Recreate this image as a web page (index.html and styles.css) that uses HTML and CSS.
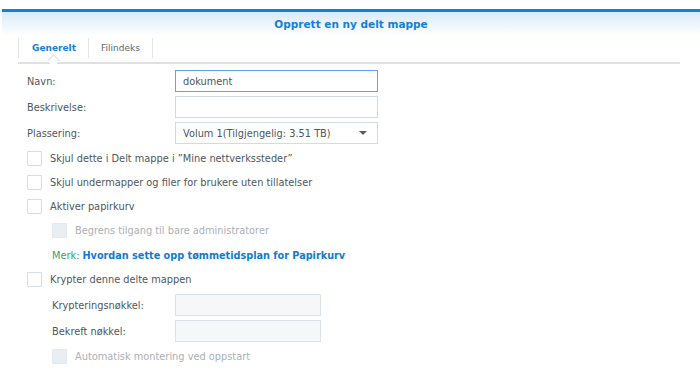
FILE: index.html
```html
<!DOCTYPE html>
<html lang="no">
<head>
    <meta charset="UTF-8">
    <meta name="viewport" content="width=device-width, initial-scale=1.0">
    <title>Opprett en ny delt mappe</title>
    <link rel="stylesheet" href="styles.css">
</head>
<body>
    <div class="dialog">
        <div class="header">Opprett en ny delt mappe</div>
        <div class="tabs">
            <div class="tab active">Generelt</div>
            <div class="tab">Filindeks</div>
        </div>
        <form class="form">
            <div class="field">
                <label for="navn">Navn:</label>
                <input type="text" id="navn" class="text focus" value="dokument">
            </div>
            <div class="field">
                <label for="beskrivelse">Beskrivelse:</label>
                <input type="text" id="beskrivelse" class="text">
            </div>
            <div class="field">
                <label>Plassering:</label>
                <div class="select">
                    <span>Volum 1(Tilgjengelig: 3.51 TB)</span>
                    <span class="arrow"></span>
                </div>
            </div>

            <div class="check"><span class="box"></span>Skjul dette i Delt mappe i ”Mine nettverkssteder”</div>
            <div class="check"><span class="box"></span>Skjul undermapper og filer for brukere uten tillatelser</div>
            <div class="check"><span class="box"></span>Aktiver papirkurv</div>
            <div class="check sub disabled tall"><span class="box"></span>Begrens tilgang til bare administratorer</div>
            <div class="note sub"><span class="merk">Merk:</span> <a href="#">Hvordan sette opp tømmetidsplan for Papirkurv</a></div>
            <div class="check tall"><span class="box"></span>Krypter denne delte mappen</div>

            <div class="field sub">
                <label for="key">Krypteringsnøkkel:</label>
                <input type="password" id="key" class="text short" disabled>
            </div>
            <div class="field sub">
                <label for="key2">Bekreft nøkkel:</label>
                <input type="password" id="key2" class="text short" disabled>
            </div>
            <div class="check sub disabled"><span class="box"></span>Automatisk montering ved oppstart</div>
        </form>
    </div>
</body>
</html>
```

FILE: styles.css
```css
body {
    margin: 0;
    padding: 0;
    background-color: #fff;
    font-family: "DejaVu Sans", Verdana, sans-serif;
    font-size: 9.8px;
    color: #4d5660;
}
.dialog {
    padding-top: 9px;
}
.header {
    margin-left: 2px;
    height: 24px;
    line-height: 24px;
    border-top: 3px solid #0a84e0;
    background: linear-gradient(#d9eaf8, #fff);
    text-align: center;
    font-weight: bold;
    font-size: 10.5px;
    color: #1082d8;
}
.tabs {
    display: flex;
    margin: 0 20px 0 18px;
    padding-top: 2px;
    height: 24px;
    border-bottom: 2px solid #e0e0e0;
}
.tab {
    position: relative;
    padding: 0 12px 0 12px;
    line-height: 20px;
    height: 20px;
    border-right: 1px solid #e4e4e4;
    font-size: 9px;
    color: #5c6670;
}
.tab:first-child {
    padding-left: 13px;
    border-left: 1px solid #e4e4e4;
}
.tab.active {
    font-weight: bold;
    color: #1082d8;
}
.tab.active::after {
    content: "";
    position: absolute;
    left: 30px;
    bottom: -7px;
    width: 8px;
    height: 8px;
    background: #fff;
    border-left: 1px solid #dcdcdc;
    border-top: 1px solid #dcdcdc;
    transform: rotate(45deg);
}
.form {
    padding: 4px 0 0 27px;
}
.field {
    display: flex;
    align-items: center;
    height: 26px;
}
.field label {
    width: 148px;
}
.field.sub label {
    width: 123px;
}
.sub {
    padding-left: 25px;
}
.text,
.select {
    box-sizing: border-box;
    width: 203px;
    height: 22px;
    margin: 0;
    padding: 0 7px;
    border: 1px solid #d3dbe2;
    border-radius: 0;
    font-family: inherit;
    font-size: 9.8px;
    color: #4d5660;
    outline: none;
}
.text.focus {
    border-color: #5aa6e6;
}
.text.short {
    width: 146px;
    background-color: #f5f7f9;
    border-color: #dae1e7;
}
.select {
    display: flex;
    align-items: center;
    justify-content: space-between;
}
.arrow {
    width: 0;
    height: 0;
    margin-right: 3px;
    border-left: 4px solid transparent;
    border-right: 4px solid transparent;
    border-top: 4px solid #555d66;
}
.check {
    display: flex;
    align-items: center;
    height: 24px;
}
.check.tall {
    height: 25px;
}
.box {
    box-sizing: border-box;
    width: 15px;
    height: 15px;
    margin-right: 8px;
    border: 1px solid #d6dde3;
    border-radius: 1px;
    background: #fff;
}
.disabled {
    color: #a9b0b7;
}
.disabled .box {
    background-color: #e9eef3;
    border-color: #e4e9ee;
}
.note {
    display: flex;
    align-items: center;
    height: 24px;
}
.merk {
    color: #2aa86e;
    margin-right: 3px;
}
.note a {
    color: #0d7cd6;
    font-weight: bold;
    font-size: 9.7px;
    text-decoration: none;
}
```
